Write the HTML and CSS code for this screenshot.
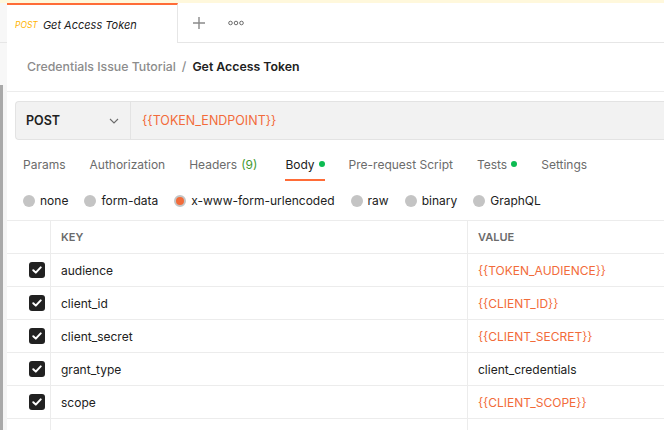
FILE: index.html
```html
<!DOCTYPE html>
<html>
<head>
<meta charset="utf-8">
<link rel="stylesheet" href="styles.css">
</head>
<body>
<div class="notice"></div>
<div class="app">
  <div class="edge">
    <div class="edge-top"></div>
    <div class="edge-body"><div class="edge-bar"></div><div class="edge-fill"></div></div>
  </div>
  <div class="main">
    <div class="tabbar">
      <div class="tab">
        <span class="tab-method">POST</span>
        <span class="tab-name">Get Access Token</span>
      </div>
      <div class="tab-actions">
        <svg class="plus" width="14" height="14" viewBox="0 0 14 14"><path d="M7 1v12M1 7h12" stroke="#8a8a8a" stroke-width="1.4" fill="none"/></svg>
        <svg class="more" width="16" height="6" viewBox="0 0 16 6"><circle cx="2.5" cy="3" r="1.8" stroke="#6b6b6b" stroke-width="1" fill="none"/><circle cx="8" cy="3" r="1.8" stroke="#6b6b6b" stroke-width="1" fill="none"/><circle cx="13.5" cy="3" r="1.8" stroke="#6b6b6b" stroke-width="1" fill="none"/></svg>
      </div>
    </div>
    <div class="crumbs">
      <span class="crumb-parent">Credentials Issue Tutorial</span>
      <span class="crumb-sep">/</span>
      <span class="crumb-current">Get Access Token</span>
    </div>
    <div class="urlbar">
      <div class="method">
        <span>POST</span>
        <svg width="10" height="6" viewBox="0 0 10 6"><path d="M1 1l4 4 4-4" stroke="#6b6b6b" stroke-width="1.1" fill="none"/></svg>
      </div>
      <div class="url">{{TOKEN_ENDPOINT}}</div>
    </div>
    <div class="reqtabs">
      <span class="rtab">Params</span>
      <span class="rtab">Authorization</span>
      <span class="rtab headers">Headers <span class="count">(9)</span></span>
      <span class="rtab active">Body<i class="dot"></i></span>
      <span class="rtab">Pre-request Script</span>
      <span class="rtab">Tests<i class="dot"></i></span>
      <span class="rtab">Settings</span>
    </div>
    <div class="bodytypes">
      <label class="radio"><i class="circle"></i>none</label>
      <label class="radio"><i class="circle"></i>form-data</label>
      <label class="radio"><i class="circle on"></i>x-www-form-urlencoded</label>
      <label class="radio"><i class="circle"></i>raw</label>
      <label class="radio"><i class="circle"></i>binary</label>
      <label class="radio"><i class="circle"></i>GraphQL</label>
    </div>
    <div class="table">
      <div class="row head">
        <div class="c-check"></div>
        <div class="c-key">KEY</div>
        <div class="c-val">VALUE</div>
      </div>
      <div class="row">
        <div class="c-check"><span class="cb"><svg width="10" height="8" viewBox="0 0 10 8"><path d="M1.3 4.2l2.5 2.4 4.9-5.2" stroke="#fff" stroke-width="2" fill="none" stroke-linecap="round" stroke-linejoin="round"/></svg></span></div>
        <div class="c-key">audience</div>
        <div class="c-val var">{{TOKEN_AUDIENCE}}</div>
      </div>
      <div class="row">
        <div class="c-check"><span class="cb"><svg width="10" height="8" viewBox="0 0 10 8"><path d="M1.3 4.2l2.5 2.4 4.9-5.2" stroke="#fff" stroke-width="2" fill="none" stroke-linecap="round" stroke-linejoin="round"/></svg></span></div>
        <div class="c-key">client_id</div>
        <div class="c-val var">{{CLIENT_ID}}</div>
      </div>
      <div class="row">
        <div class="c-check"><span class="cb"><svg width="10" height="8" viewBox="0 0 10 8"><path d="M1.3 4.2l2.5 2.4 4.9-5.2" stroke="#fff" stroke-width="2" fill="none" stroke-linecap="round" stroke-linejoin="round"/></svg></span></div>
        <div class="c-key">client_secret</div>
        <div class="c-val var">{{CLIENT_SECRET}}</div>
      </div>
      <div class="row">
        <div class="c-check"><span class="cb"><svg width="10" height="8" viewBox="0 0 10 8"><path d="M1.3 4.2l2.5 2.4 4.9-5.2" stroke="#fff" stroke-width="2" fill="none" stroke-linecap="round" stroke-linejoin="round"/></svg></span></div>
        <div class="c-key">grant_type</div>
        <div class="c-val">client_credentials</div>
      </div>
      <div class="row">
        <div class="c-check"><span class="cb"><svg width="10" height="8" viewBox="0 0 10 8"><path d="M1.3 4.2l2.5 2.4 4.9-5.2" stroke="#fff" stroke-width="2" fill="none" stroke-linecap="round" stroke-linejoin="round"/></svg></span></div>
        <div class="c-key">scope</div>
        <div class="c-val var">{{CLIENT_SCOPE}}</div>
      </div>
      <div class="row">
        <div class="c-check"></div>
        <div class="c-key ph">Key</div>
        <div class="c-val ph">Value</div>
      </div>
    </div>
  </div>
</div>
</body>
</html>
```
FILE: styles.css
```css
html, body {
  margin: 0;
  padding: 0;
}
body {
  width: 664px;
  height: 430px;
  overflow: hidden;
  background: #fff;
  font-family: Inter, "Noto Sans", sans-serif;
  color: #212121;
  font-size: 12px;
}
.notice {
  height: 3px;
  background: #fff8dc;
}
.app {
  display: flex;
  height: 427px;
  overflow: hidden;
}
.edge {
  width: 7px;
  flex: none;
  display: flex;
  flex-direction: column;
}
.edge-top {
  flex: none;
  height: 39px;
  background: #f7f7f7;
  border-bottom: 1px solid #e6e6e6;
}
.edge-body {
  flex: 1;
  display: flex;
  padding-top: 42px;
  background: #f7f7f7;
}
.edge-bar {
  width: 3px;
  background: #a9a9a9;
}
.edge-fill {
  flex: 1;
  background: #f5f5f5;
}
.main {
  flex: 1;
  min-width: 0;
  display: flex;
  flex-direction: column;
}
.main > * {
  flex: none;
}
.tabbar {
  height: 40px;
  display: flex;
}
.tab {
  width: 171px;
  box-sizing: border-box;
  border-top: 2px solid #ff6c37;
  border-right: 1px solid #e6e6e6;
  display: flex;
  align-items: center;
  padding: 2px 0 0 8px;
  gap: 5px;
  font-style: italic;
}
.tab-method {
  font-size: 8.5px;
  color: #ffb400;
}
.tab-name {
  font-size: 11px;
  color: #212121;
}
.tab-actions {
  flex: 1;
  border-bottom: 1px solid #e6e6e6;
  display: flex;
  align-items: center;
  padding-left: 14px;
  gap: 22px;
}
.crumbs {
  height: 47px;
  border-bottom: 1px solid #ececec;
  display: flex;
  align-items: center;
  padding: 0 0 1px 20px;
  gap: 6px;
  font-size: 12.3px;
  font-weight: 500;
}
.crumb-parent { color: #8c8c8c; }
.crumb-sep { color: #8c8c8c; }
.crumb-current { color: #212121; font-weight: 600; }
.urlbar {
  margin: 9px 0 0 8px;
  height: 37px;
  border: 1px solid #e3e3e3;
  border-right: none;
  border-radius: 4px 0 0 4px;
  background: #f2f2f2;
  display: flex;
}
.method {
  width: 115px;
  box-sizing: border-box;
  border-right: 1px solid #e3e3e3;
  display: flex;
  align-items: center;
  justify-content: space-between;
  padding: 0 11px 0 10px;
  font-weight: 600;
  font-size: 12.5px;
}
.url {
  display: flex;
  align-items: center;
  padding-left: 11px;
  color: #f26b3a;
  font-size: 12.5px;
}
.reqtabs {
  display: flex;
  gap: 24px;
  padding: 0 0 0 16px;
  margin-top: 9px;
  height: 32px;
  color: #6b6b6b;
}
.rtab {
  display: flex;
  align-items: center;
  height: 32px;
  box-sizing: border-box;
  border-bottom: 2px solid transparent;
}
.rtab.headers {
  margin-right: 4px;
}
.rtab.active {
  color: #212121;
  border-bottom-color: #ff6c37;
}
.count {
  color: #3f9a2f;
  margin-left: 4px;
}
.dot {
  width: 6px;
  height: 6px;
  border-radius: 50%;
  background: #0cbb52;
  margin-left: 4px;
}
.bodytypes {
  display: flex;
  gap: 16px;
  padding-left: 16px;
  height: 39px;
  align-items: center;
  color: #212121;
}
.radio {
  display: flex;
  align-items: center;
  gap: 5px;
}
.circle {
  width: 12px;
  height: 12px;
  border-radius: 50%;
  background: #c4c4c4;
  box-sizing: border-box;
}
.circle.on {
  background: #f26b3a;
  border: 2px solid #c4c4c4;
}
.table {
  border-top: 1px solid #ececec;
}
.row {
  display: grid;
  grid-template-columns: 44px 417px 1fr;
  height: 33px;
  box-sizing: border-box;
  border-bottom: 1px solid #ececec;
}
.row > div {
  display: flex;
  align-items: center;
}
.c-check {
  justify-content: flex-end;
  padding-right: 5px;
  border-right: 1px solid #ececec;
}
.c-key {
  padding-left: 10px;
  border-right: 1px solid #ececec;
}
.c-val {
  padding-left: 10px;
}
.head {
  font-size: 11px;
  font-weight: 600;
  color: #6b6b6b;
}
.var { color: #f26b3a; }
.ph { color: #b3b3b3; }
.cb {
  width: 16px;
  height: 16px;
  border-radius: 3px;
  background: #212121;
  display: flex;
  align-items: center;
  justify-content: center;
}
```
